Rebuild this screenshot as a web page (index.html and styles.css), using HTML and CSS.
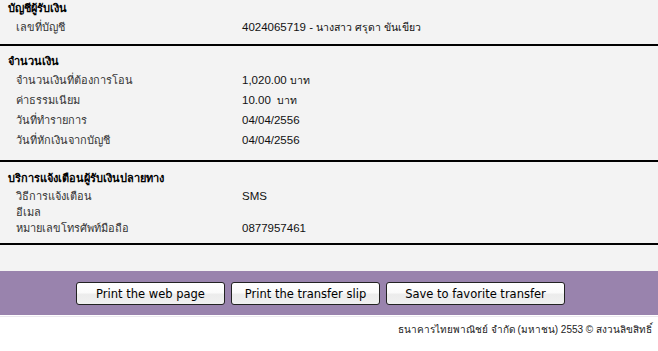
FILE: index.html
```html
<!DOCTYPE html>
<html lang="th">
<head>
<meta charset="utf-8">
<link rel="stylesheet" href="styles.css">
</head>
<body>
<div class="content">
  <section class="sec sec1">
    <div class="head">บัญชีผู้รับเงิน</div>
    <div class="row r20"><span class="lab">เลขที่บัญชี</span><span class="val">4024065719 - <span class="th">นางสาว ศรุดา ขันเขียว</span></span></div>
  </section>
  <section class="sec sec2">
    <div class="head">จำนวนเงิน</div>
    <div class="row r20"><span class="lab">จำนวนเงินที่ต้องการโอน</span><span class="val">1,020.00 <span class="th">บาท</span></span></div>
    <div class="row r20"><span class="lab">ค่าธรรมเนียม</span><span class="val">10.00&nbsp; <span class="th">บาท</span></span></div>
    <div class="row r20"><span class="lab">วันที่ทำรายการ</span><span class="val">04/04/2556</span></div>
    <div class="row r20"><span class="lab">วันที่หักเงินจากบัญชี</span><span class="val">04/04/2556</span></div>
  </section>
  <section class="sec sec3">
    <div class="head h19">บริการแจ้งเตือนผู้รับเงินปลายทาง</div>
    <div class="row r16"><span class="lab">วิธีการแจ้งเตือน</span><span class="val">SMS</span></div>
    <div class="row r16"><span class="lab">อีเมล</span><span class="val"></span></div>
    <div class="row r16"><span class="lab">หมายเลขโทรศัพท์มือถือ</span><span class="val">0877957461</span></div>
  </section>
</div>
<div class="bar">
  <button class="btn w149">Print the web page</button>
  <button class="btn w149">Print the transfer slip</button>
  <button class="btn w179">Save to favorite transfer</button>
</div>
<div class="footer">ธนาคารไทยพาณิชย์ จำกัด (มหาชน) 2553 © สงวนลิขสิทธิ์</div>
</body>
</html>
```
FILE: styles.css
```css
html, body {
  margin: 0;
  padding: 0;
  background: #ffffff;
}
body {
  font-family: Tahoma, "Liberation Sans", "Noto Sans", sans-serif;
  color: #222;
}
.content {
  background: #f3f3f3;
  padding-bottom: 26px;
}
.sec {
  border-bottom: 2px solid #000;
}
.sec1 { padding-bottom: 7px; }
.sec2 { padding-top: 6px; padding-bottom: 10px; }
.sec3 { padding-top: 7px; padding-bottom: 7px; }
.head {
  height: 17px;
  line-height: 17px;
  padding-left: 8px;
  font-size: 11px;
  font-weight: bold;
  color: #000;
}
.sec2 .head { height: 18px; line-height: 18px; }
.head.h19 { height: 19px; line-height: 19px; }
.row {
  display: flex;
  align-items: center;
  font-size: 11px;
}
.r20 { height: 20px; }
.r16 { height: 16px; }
.lab {
  width: 226px;
  padding-left: 16px;
  color: #333;
  font-size: 11px;
}
.val {
  font-family: "Liberation Sans", Arial, sans-serif;
  font-size: 11.5px;
  color: #111;
}
.val .th {
  font-family: Tahoma, "Liberation Sans", sans-serif;
  font-size: 10.5px;
}
.bar {
  background: #9983ad;
  height: 45px;
  box-sizing: border-box;
  padding: 11px 0 0 76px;
  display: flex;
  gap: 6px;
  align-items: flex-start;
  border-bottom: 1px solid #ffffff;
}
.btn {
  height: 23px;
  box-sizing: border-box;
  border: 1px solid #222;
  border-radius: 3px;
  background: linear-gradient(#ffffff 0%, #fbfbfb 45%, #ececec 55%, #f0f0f0 100%);
  font-family: "DejaVu Sans", Verdana, sans-serif;
  font-size: 11.5px;
  color: #000;
  padding: 0;
  margin: 0;
}
.w149 { width: 149px; }
.w179 { width: 179px; }
.footer {
  border-top: 1px solid #ebe8ee;
  text-align: right;
  padding-right: 6px;
  height: 26px;
  line-height: 26px;
  font-size: 10px;
  color: #222;
}
```
